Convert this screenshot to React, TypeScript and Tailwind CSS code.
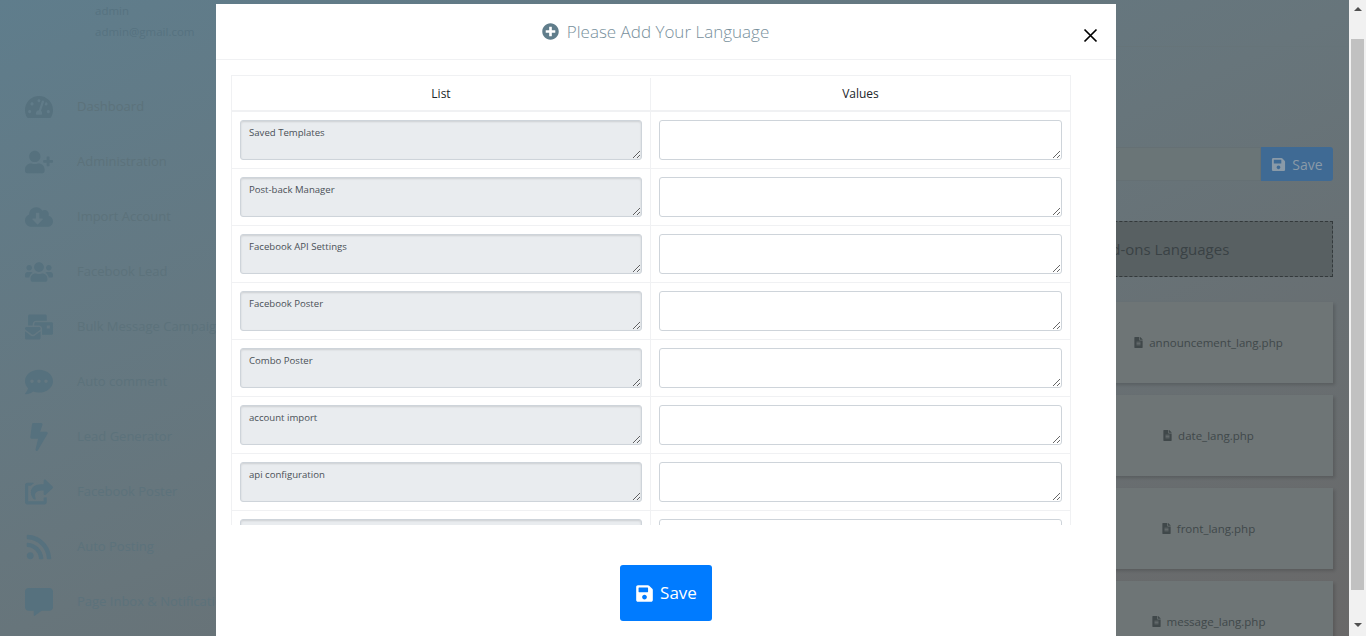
import { FC, ReactNode } from "react";
import {
  FaBolt,
  FaCloudDownloadAlt,
  FaCommentAlt,
  FaCommentDots,
  FaFileAlt,
  FaMailBulk,
  FaPlusCircle,
  FaRss,
  FaSave,
  FaShareSquare,
  FaTachometerAlt,
  FaUserPlus,
  FaUsers,
} from "react-icons/fa";

const font = "font-['Open_Sans',sans-serif]";

const menuItems: { label: string; icon: ReactNode }[] = [
  { label: "Dashboard", icon: <FaTachometerAlt /> },
  { label: "Administration", icon: <FaUserPlus /> },
  { label: "Import Account", icon: <FaCloudDownloadAlt /> },
  { label: "Facebook Lead", icon: <FaUsers /> },
  { label: "Bulk Message Campaign", icon: <FaMailBulk /> },
  { label: "Auto comment", icon: <FaCommentDots /> },
  { label: "Lead Generator", icon: <FaBolt /> },
  { label: "Facebook Poster", icon: <FaShareSquare /> },
  { label: "Auto Posting", icon: <FaRss /> },
  { label: "Page Inbox & Notification", icon: <FaCommentAlt /> },
];

const files = [
  "announcement_lang.php",
  "date_lang.php",
  "front_lang.php",
  "message_lang.php",
];

const rows = [
  "Saved Templates",
  "Post-back Manager",
  "Facebook API Settings",
  "Facebook Poster",
  "Combo Poster",
  "account import",
  "api configuration",
  "",
];

const Sidebar: FC = () => (
  <div className="w-[216px] shrink-0">
    <div className="h-[78px] pl-[95px] text-[11.5px] leading-[21px] text-[#567280] whitespace-nowrap">
      <p>admin</p>
      <p>admin@gmail.com</p>
    </div>
    <div className="mt-[1px]">
      {menuItems.map((item) => (
        <div key={item.label} className="flex items-center h-[55px] pl-[25px]">
          <span className="w-[52px] shrink-0 text-[28px] text-[#56717e]">
            {item.icon}
          </span>
          <span className="text-[13px] text-[#5c727b] whitespace-nowrap">
            {item.label}
          </span>
        </div>
      ))}
    </div>
  </div>
);

const MainContent: FC = () => (
  <div className="flex-1 min-w-0">
    <div className="h-[47px] border-b border-[#667479]" />
    <div className="pr-4 flex flex-col items-end">
      <div className="mt-[100px] flex h-[34px] w-[500px] justify-end">
        <div className="flex-1 border border-[#657074] bg-[#6a7577]" />
        <div className="w-[72px] flex items-center justify-center gap-[6px] rounded-r-[3px] bg-[#3f6a94] text-[14px] text-[#8a9aa8]">
          <FaSave className="text-[15px]" />
          <span>Save</span>
        </div>
      </div>
      <div className="mt-[40px] flex h-[56px] w-[344px] items-center justify-center border border-dashed border-[#33393b] bg-[#586062] text-[15px] text-[#3a4245] whitespace-nowrap">
        Add-ons Languages
      </div>
      <div className="mt-[25px] flex flex-col gap-[12px]">
        {files.map((file) => (
          <div
            key={file}
            className="flex h-[81px] w-[250px] items-center justify-center gap-[5px] bg-[#6e7576] text-[11.5px] text-[#40484a] shadow-[2px_2px_3px_rgba(0,0,0,0.15)]"
          >
            <FaFileAlt className="text-[11px]" />
            <span>{file}</span>
          </div>
        ))}
      </div>
    </div>
  </div>
);

const ScrollBar: FC = () => (
  <div className="w-[17px] shrink-0 flex flex-col bg-[#f1f1f1]">
    <div className="flex h-[39px] justify-center pt-[7px]">
      <div className="h-0 w-0 border-x-[4px] border-b-[4px] border-x-transparent border-b-[#505050]" />
    </div>
    <div className="mx-[2px] h-[233px] flex-1 bg-[#c1c1c1]" />
    <div className="flex h-[46px] justify-center pt-[33px]">
      <div className="h-0 w-0 border-x-[4px] border-t-[4px] border-x-transparent border-t-[#505050]" />
    </div>
  </div>
);

const LanguageModal: FC = () => (
  <div className="absolute left-[216px] top-[4px] bottom-0 w-[900px] flex flex-col bg-white">
    <div className="relative h-[56px] shrink-0 flex items-center justify-center gap-[8px] border-b border-[#f0f1f3] pr-[21px]">
      <FaPlusCircle className="text-[17px] text-[#607d8b]" />
      <span className="text-[17px] font-light text-[#78909c]">
        Please Add Your Language
      </span>
      <svg
        className="absolute left-[867px] top-[24px]"
        width="15"
        height="15"
        viewBox="0 0 15 15"
        stroke="#000"
        strokeWidth="1.7"
      >
        <path d="M1.5 1.5 L13.5 13.5 M13.5 1.5 L1.5 13.5" />
      </svg>
    </div>
    <div className="mt-[15px] ml-[15px] h-[450px] w-[840px] shrink-0 overflow-hidden">
      <div className="border border-[#f0f1f3]">
        <div className="grid grid-cols-2 h-[36px] border-b-2 border-[#f0f1f3] pt-[2px] text-[12px] text-[#212529]">
          <div className="flex items-center justify-center border-r border-[#f0f1f3]">
            List
          </div>
          <div className="flex items-center justify-center">Values</div>
        </div>
        {rows.map((label, i) => (
          <div
            key={i}
            className="grid grid-cols-2 h-[57px] border-b border-[#f0f1f3]"
          >
            <div className="flex items-center px-[8px] border-r border-[#f0f1f3]">
              <textarea
                readOnly
                defaultValue={label}
                className="block h-[40px] w-full rounded-[3px] border border-[#ced4da] bg-[#e9ecef] px-[8px] py-[4px] text-[9.6px] leading-[15px] text-[#495057] shadow-[inset_0_1px_2px_rgba(0,0,0,0.12)] outline-none"
              />
            </div>
            <div className="flex items-center px-[8px]">
              <textarea
                readOnly
                className="block h-[40px] w-full rounded-[3px] border border-[#ced4da] bg-white px-[8px] py-[4px] text-[10px] outline-none"
              />
            </div>
          </div>
        ))}
      </div>
    </div>
    <div className="mt-[40px] flex justify-center">
      <button
        type="button"
        className="flex h-[56px] w-[92px] items-center justify-center gap-[6px] rounded-[3px] bg-[#007bff] text-[17px] text-white"
      >
        <FaSave className="text-[19px]" />
        <span>Save</span>
      </button>
    </div>
  </div>
);

export default function App() {
  return (
    <div
      className={`relative flex h-[636px] w-full overflow-hidden bg-gradient-to-br from-[#5f7d8c] via-[#67757b] to-[#696868] ${font}`}
    >
      <Sidebar />
      <MainContent />
      <ScrollBar />
      <LanguageModal />
    </div>
  );
}
